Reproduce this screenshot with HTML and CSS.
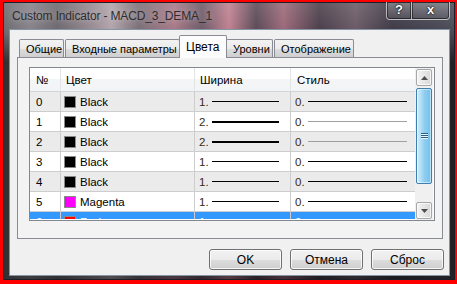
FILE: index.html
```html
<!DOCTYPE html>
<html>
<head>
<meta charset="utf-8">
<link rel="stylesheet" href="styles.css">
</head>
<body>
<div class="win">
  <div class="titlebar">
    <div class="title">Custom Indicator - MACD_3_DEMA_1</div>
    <div class="capbtns">
      <div class="capbtn help">?</div>
      <div class="capbtn close">x</div>
    </div>
  </div>
  <div class="client">
    <div class="tabs">
      <div class="tab t1">Общие</div>
      <div class="tab t2">Входные параметры</div>
      <div class="tab sel">Цвета</div>
      <div class="tab t4">Уровни</div>
      <div class="tab t5">Отображение</div>
    </div>
    <div class="panel">
      <div class="list">
        <div class="listmain">
          <div class="row head">
            <div class="c n">№</div>
            <div class="c col">Цвет</div>
            <div class="c w">Ширина</div>
            <div class="c s">Стиль</div>
          </div>
          <div class="body">
            <div class="row even">
              <div class="c n">0</div>
              <div class="c col"><span class="sw black"></span>Black</div>
              <div class="c w"><span class="num">1.</span><span class="ln l1"></span></div>
              <div class="c s"><span class="num">0.</span><span class="ln sl"></span></div>
            </div>
            <div class="row">
              <div class="c n">1</div>
              <div class="c col"><span class="sw black"></span>Black</div>
              <div class="c w"><span class="num">2.</span><span class="ln l2"></span></div>
              <div class="c s"><span class="num">0.</span><span class="ln sl gray"></span></div>
            </div>
            <div class="row even">
              <div class="c n">2</div>
              <div class="c col"><span class="sw black"></span>Black</div>
              <div class="c w"><span class="num">2.</span><span class="ln l2"></span></div>
              <div class="c s"><span class="num">0.</span><span class="ln sl gray"></span></div>
            </div>
            <div class="row">
              <div class="c n">3</div>
              <div class="c col"><span class="sw black"></span>Black</div>
              <div class="c w"><span class="num">1.</span><span class="ln l1"></span></div>
              <div class="c s"><span class="num">0.</span><span class="ln sl"></span></div>
            </div>
            <div class="row even">
              <div class="c n">4</div>
              <div class="c col"><span class="sw black"></span>Black</div>
              <div class="c w"><span class="num">1.</span><span class="ln l1"></span></div>
              <div class="c s"><span class="num">0.</span><span class="ln sl"></span></div>
            </div>
            <div class="row">
              <div class="c n">5</div>
              <div class="c col"><span class="sw magenta"></span>Magenta</div>
              <div class="c w"><span class="num">1.</span><span class="ln l1"></span></div>
              <div class="c s"><span class="num">0.</span><span class="ln sl"></span></div>
            </div>
            <div class="row selrow">
              <div class="c n">6</div>
              <div class="c col"><span class="sw red"></span>Red</div>
              <div class="c w"><span class="num">1.</span><span class="ln l1 white"></span></div>
              <div class="c s"><span class="num">0.</span><span class="ln sl white"></span></div>
            </div>
          </div>
        </div>
        <div class="vscroll">
          <div class="sbtn up"><svg width="7" height="4" viewBox="0 0 7 4"><path d="M0 4 L3.5 0 L7 4 Z" fill="#4d4d4d"/></svg></div>
          <div class="thumb"><span class="grip"></span><span class="grip"></span><span class="grip"></span></div>
          <div class="track"></div>
          <div class="sbtn down"><svg width="7" height="4" viewBox="0 0 7 4"><path d="M0 0 L3.5 4 L7 0 Z" fill="#4d4d4d"/></svg></div>
        </div>
      </div>
    </div>
    <div class="buttons">
      <div class="btn">OK</div>
      <div class="btn">Отмена</div>
      <div class="btn">Сброс</div>
    </div>
  </div>
</div>
</body>
</html>
```
FILE: styles.css
```css
html, body {
  margin: 0;
  padding: 0;
}
body {
  width: 457px;
  height: 284px;
  overflow: hidden;
  background: #ff0000;
  font-family: "Liberation Sans", Arial, sans-serif;
  font-size: 11.5px;
  color: #000;
}
.win {
  margin: 2px 2px 4px 3px;
  height: 278px;
  display: flex;
  flex-direction: column;
  background:
    linear-gradient(to bottom, rgba(255,255,255,0.12), rgba(0,0,0,0) 30px, rgba(0,0,0,0.55) 60px),
    linear-gradient(90deg, #6a6a6e 0%, #88828a 6%, #6c686e 12%, #9a8c94 20%, #b2a4ac 24%, #7a6e76 30%, #a87888 38%, #6c5a66 44%, #c08090 50%, #5a4a56 56%, #9c6878 62%, #4a3e4a 70%, #6a5a66 78%, #3e3a46 86%, #4a4c58 100%);
  background-color: #1c2634;
  box-shadow: inset 0 0 0 1px #1a1f28;
}
.titlebar {
  height: 27px;
  display: flex;
  justify-content: space-between;
  align-items: flex-start;
  flex-shrink: 0;
}
.title {
  font-size: 12px;
  letter-spacing: -0.15px;
  color: #2e2e2e;
  padding: 7px 0 0 9px;
  text-shadow: 0 0 6px rgba(255,255,255,0.45);
}
.capbtns {
  display: flex;
  margin-right: 5px;
}
.capbtn {
  height: 17px;
  border: 1px solid rgba(255,255,255,0.55);
  border-top: none;
  box-shadow: inset 0 0 0 1px rgba(0,0,0,0.5);
  background: linear-gradient(to bottom, rgba(255,255,255,0.25), rgba(255,255,255,0.05));
  color: #fff;
  font-weight: bold;
  font-size: 13px;
  text-align: center;
  line-height: 16px;
  text-shadow: 0 0 2px #000, 0 0 1px #000;
}
.help {
  width: 24px;
  border-radius: 0 0 0 4px;
}
.close {
  width: 37px;
  border-left: none;
  border-radius: 0 0 4px 0;
}
.client {
  flex: 1;
  margin: 0 5px 4px 6px;
  background: #f0f0f0;
  border: 1px solid #8595a6;
  padding: 5px 5px 0 7px;
  display: flex;
  flex-direction: column;
}
.tabs {
  display: flex;
  height: 22px;
  padding-left: 2px;
  align-items: flex-end;
  position: relative;
  z-index: 1;
  font-size: 11px;
}
.tab {
  height: 18px;
  border: 1px solid #898c95;
  border-bottom: none;
  border-radius: 2px 2px 0 0;
  background: linear-gradient(to bottom, #f2f2f2, #ebebeb 50%, #dddddd 50%, #cfcfcf);
  line-height: 19px;
  padding: 0 0 0 6px;
  box-sizing: border-box;
  margin-right: 1px;
  white-space: nowrap;
}
.t1 { width: 45px; }
.t2 { width: 115px; }
.t4 { width: 47px; margin-left: -1px; }
.t5 { width: 80px; }
.tab.sel {
  height: 23px;
  width: 48px;
  margin: 0 0 -1px -2px;
  background: #fcfcfc;
  line-height: 22px;
  padding-left: 6px;
  font-size: 12px;
}
.panel {
  width: 426px;
  height: 182px;
  box-sizing: border-box;
  border: 1px solid #898c95;
  background: #f3f3f3;
  padding: 9px 0 0 11px;
}
.list {
  width: 406px;
  height: 154px;
  box-sizing: border-box;
  border: 1px solid #828790;
  background: #fff;
  display: flex;
}
.listmain {
  width: 385px;
  display: flex;
  flex-direction: column;
}
.row {
  display: flex;
  height: 20px;
  box-sizing: border-box;
  border-bottom: 1px solid #cdcdcd;
  background: #fff;
}
.row.even { background: #ebebeb; }
.row.head {
  height: 24px;
  background: linear-gradient(to bottom, #ffffff, #ffffff 50%, #f4f5f7 50%, #f3f4f6);
  border-bottom: 1px solid #d5d5d5;
}
.c {
  box-sizing: border-box;
  border-right: 1px solid #cdcdcd;
  display: flex;
  align-items: center;
  white-space: nowrap;
  overflow: hidden;
}
.head .c { border-right-color: #e3e4e6; }
.n { width: 31px; padding-left: 6px; }
.col { width: 134px; padding-left: 3px; }
.w { width: 96px; padding-left: 4px; }
.s { width: 124px; padding-left: 4px; border-right: none; }
.head .n { padding-left: 6px; }
.head .col { padding-left: 5px; }
.head .w { padding-left: 5px; }
.head .s { padding-left: 6px; }
.body {
  height: 127px;
  overflow: hidden;
}
.sw {
  width: 12px;
  height: 12px;
  box-sizing: border-box;
  border: 1px solid #8a8a8a;
  margin-right: 4px;
  flex-shrink: 0;
}
.sw.black { background: #000; }
.sw.magenta { background: #ff00ff; }
.sw.red { background: #ff0000; }
.num {
  width: 13px;
  color: #3a2a10;
}
.ln {
  display: block;
  height: 1px;
  background: #000;
}
.w .ln { width: 67px; }
.s .ln { width: 99px; }
.ln.l2 { height: 2px; }
.ln.gray { background: #a0a0a0; }
.selrow { background: #3399ff; color: #fff; border-bottom: none; }
.selrow .num { color: #fff; }
.ln.white { background: #fff; }
.vscroll {
  width: 18px;
  display: flex;
  flex-direction: column;
  background: #f0f0f0;
  box-sizing: border-box;
  padding: 1px;
}
.sbtn {
  height: 17px;
  box-sizing: border-box;
  border: 1px solid #a7a7a7;
  border-radius: 2px;
  background: linear-gradient(to right, #f4f4f4, #e6e6e6 50%, #d8d8d8);
  display: flex;
  align-items: center;
  justify-content: center;
  flex-shrink: 0;
  box-shadow: inset 0 0 0 1px rgba(255,255,255,0.7);
}
.thumb {
  margin-top: 2px;
  height: 96px;
  box-sizing: border-box;
  border: 1px solid #3c7fb1;
  border-radius: 2px;
  background: linear-gradient(to right, #d6eefb, #b0dcf5 30%, #8ccdf0 55%, #72c1ec);
  display: flex;
  flex-direction: column;
  align-items: center;
  justify-content: center;
  flex-shrink: 0;
  box-shadow: inset 0 0 0 1px rgba(255,255,255,0.5);
}
.grip {
  display: block;
  width: 7px;
  height: 1px;
  background: #2b5e86;
  box-shadow: 0 1px 0 #e8f6fd;
  margin-bottom: 1px;
}
.track { flex: 1; }
.buttons {
  display: flex;
  justify-content: flex-end;
  gap: 8px;
  margin-top: 10px;
}
.btn {
  width: 73px;
  height: 21px;
  box-sizing: border-box;
  border: 1px solid #707070;
  border-radius: 3px;
  background: linear-gradient(to bottom, #f2f2f2, #ebebeb 50%, #dddddd 50%, #cfcfcf);
  box-shadow: inset 0 0 0 1px rgba(255,255,255,0.8);
  display: flex;
  align-items: center;
  justify-content: center;
  font-size: 12px;
}
```
